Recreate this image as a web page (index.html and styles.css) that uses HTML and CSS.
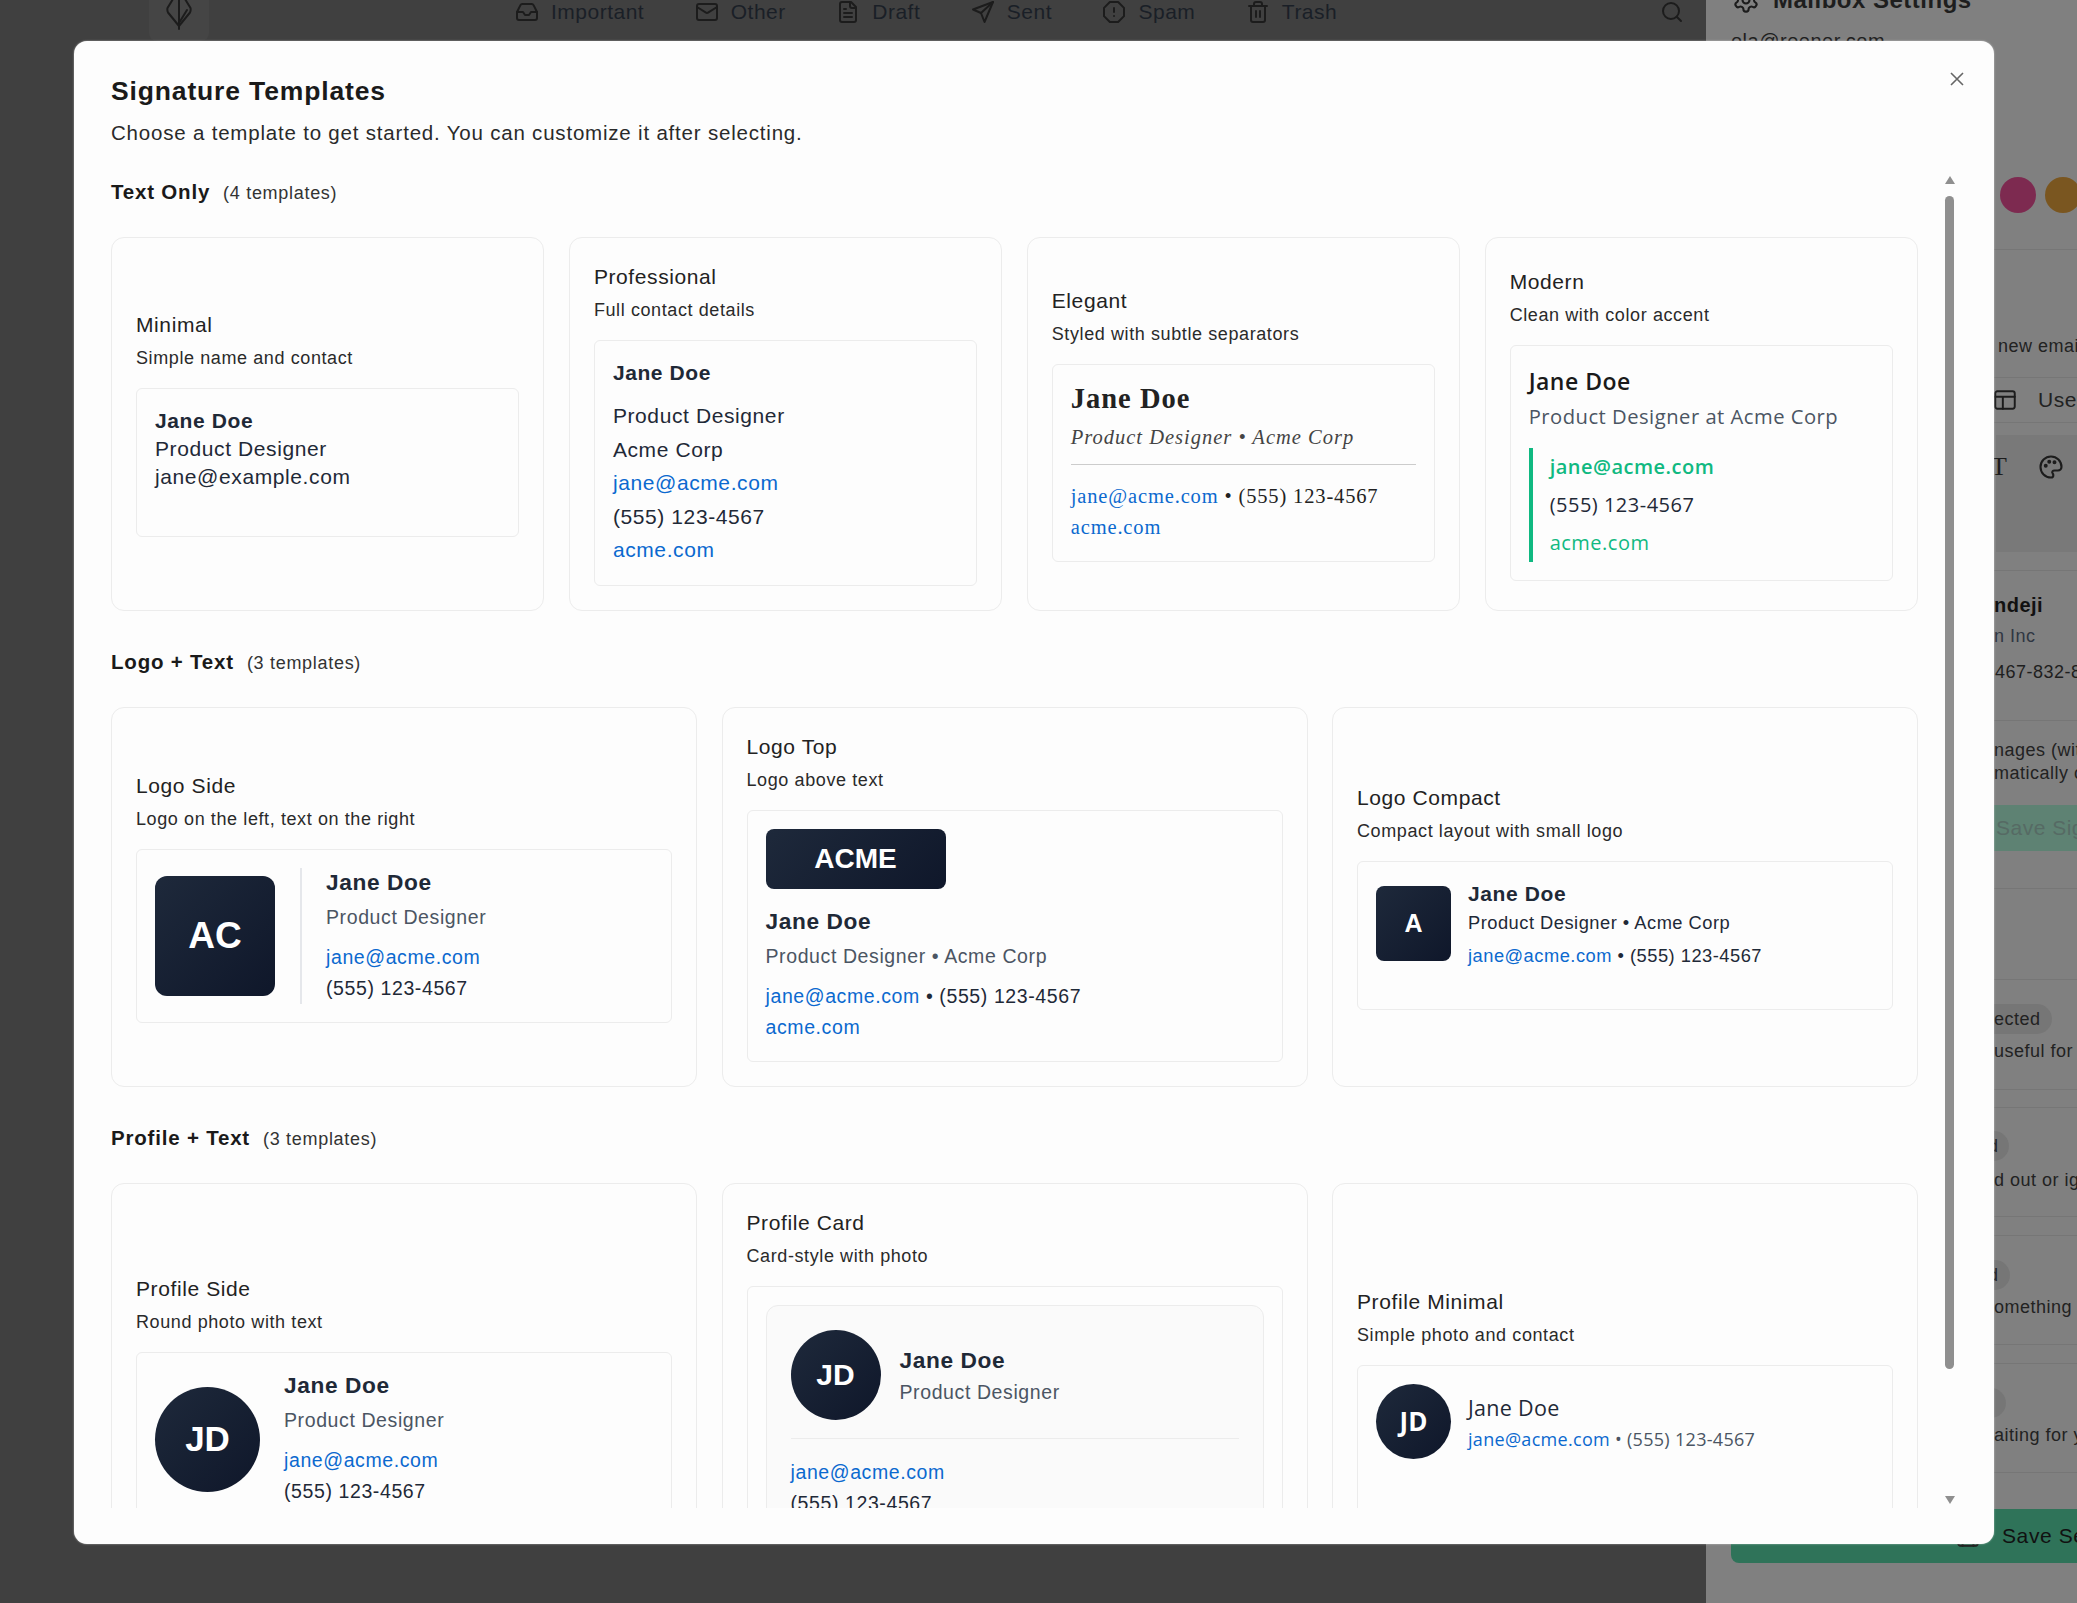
FILE: index.html
```html
<!DOCTYPE html>
<html lang="en">
<head>
    <meta charset="UTF-8">
    <title>Signature Templates</title>
    <link rel="stylesheet" href="styles.css">
</head>
<body>
    <div class="app">
        <div class="app-main">
            <div class="topnav">
                <div class="logo-tile">
                    <svg width="26" height="30" viewBox="0 0 26 30" fill="none" stroke="#1c1c1c" stroke-width="2" stroke-linejoin="round" stroke-linecap="round"><path d="M7 -1L1.500 8Q1 10 2 12.500L13 26L24 12.500Q25 10 24.500 8L19 -1"/><path d="M13 0V29"/><path d="M13 23L21 10"/></svg>
                </div>
                <div class="nav-items">
                    <div class="nav-item">
                        <svg class="nav-icon" viewBox="0 0 24 24"><path d="M22 12h-6l-2 3h-4l-2-3H2"/><path d="M5.450 5.110L2 12v6a2 2 0 0 0 2 2h16a2 2 0 0 0 2-2v-6l-3.450-6.890A2 2 0 0 0 16.760 4H7.240a2 2 0 0 0-1.790 1.110z"/></svg>
                        <span>Important</span>
                    </div>
                    <div class="nav-item">
                        <svg class="nav-icon" viewBox="0 0 24 24"><rect x="2" y="4" width="20" height="16" rx="2"/><path d="M22 7l-8.970 5.700a1.940 1.940 0 0 1-2.060 0L2 7"/></svg>
                        <span>Other</span>
                    </div>
                    <div class="nav-item">
                        <svg class="nav-icon" viewBox="0 0 24 24"><path d="M15 2H6a2 2 0 0 0-2 2v16a2 2 0 0 0 2 2h12a2 2 0 0 0 2-2V7z"/><path d="M14 2v4a2 2 0 0 0 2 2h4M10 9H8M16 13H8M16 17H8"/></svg>
                        <span>Draft</span>
                    </div>
                    <div class="nav-item">
                        <svg class="nav-icon" viewBox="0 0 24 24"><path d="M22 2L2 9.500l8 3.500 3.500 9z"/><path d="M22 2L10 13"/></svg>
                        <span>Sent</span>
                    </div>
                    <div class="nav-item">
                        <svg class="nav-icon" viewBox="0 0 24 24"><path d="M7.860 2h8.280L22 7.860v8.280L16.140 22H7.860L2 16.140V7.860z"/><path d="M12 8v4M12 16h.01"/></svg>
                        <span>Spam</span>
                    </div>
                    <div class="nav-item">
                        <svg class="nav-icon" viewBox="0 0 24 24"><path d="M3 6h18M19 6v14a2 2 0 0 1-2 2H7a2 2 0 0 1-2-2V6M8 6V4a2 2 0 0 1 2-2h4a2 2 0 0 1 2 2v2M10 11v6M14 11v6"/></svg>
                        <span>Trash</span>
                    </div>
                </div>
                <svg class="nav-icon search-icon" viewBox="0 0 24 24"><circle cx="11" cy="11" r="8"/><path d="M21 21l-4.300-4.300"/></svg>
            </div>
        </div>

        <div class="side">
            <div class="side-head">
                <svg class="gear-icon" viewBox="0 0 24 24"><path d="M12.220 2h-.44a2 2 0 0 0-2 2v.18a2 2 0 0 1-1 1.730l-.43.25a2 2 0 0 1-2 0l-.15-.08a2 2 0 0 0-2.730.73l-.22.38a2 2 0 0 0 .73 2.730l.15.1a2 2 0 0 1 1 1.720v.51a2 2 0 0 1-1 1.740l-.15.09a2 2 0 0 0-.73 2.730l.22.38a2 2 0 0 0 2.730.73l.15-.08a2 2 0 0 1 2 0l.43.25a2 2 0 0 1 1 1.730V20a2 2 0 0 0 2 2h.44a2 2 0 0 0 2-2v-.18a2 2 0 0 1 1-1.730l.43-.25a2 2 0 0 1 2 0l.15.08a2 2 0 0 0 2.730-.73l.22-.39a2 2 0 0 0-.73-2.730l-.15-.08a2 2 0 0 1-1-1.740v-.5a2 2 0 0 1 1-1.740l.15-.09a2 2 0 0 0 .73-2.730l-.22-.38a2 2 0 0 0-2.730-.73l-.15.08a2 2 0 0 1-2 0l-.43-.25a2 2 0 0 1-1-1.730V4a2 2 0 0 0-2-2z"/><circle cx="12" cy="12" r="3"/></svg>
                <span class="side-title">Mailbox Settings</span>
            </div>
            <div class="side-mail">ola@reener.com</div>

            <div class="swatches">
                <span class="swatch swatch-pink"></span>
                <span class="swatch swatch-amber"></span>
            </div>

            <div class="side-line line-a"></div>
            <div class="side-text text-new">new email</div>
            <div class="use-row">
                <svg class="side-icon" viewBox="0 0 24 24"><rect x="3" y="4" width="18" height="16" rx="2"/><path d="M3 9h18M10 9v11"/></svg>
                <span>Use</span>
            </div>
            <div class="toolbar">
                <span class="tool-t">T</span>
                <svg class="side-icon palette" viewBox="0 0 24 24"><path d="M12 3a9 9 0 1 0 0 18c1.500 0 2-1 2-2 0-.6-.3-1-.6-1.500-.4-.5-.4-1.500 0-2 .4-.5 1-.5 1.600-.5H18a3 3 0 0 0 3-3c0-5-4-9-9-9z"/><circle cx="7.500" cy="11" r=".8"/><circle cx="10.500" cy="7.500" r=".8"/><circle cx="15" cy="8" r=".8"/></svg>
            </div>
            <div class="side-line line-b"></div>
            <div class="person-name">ndeji</div>
            <div class="person-org">n Inc</div>
            <div class="person-tel">467-832-8</div>
            <div class="side-line line-c"></div>
            <div class="side-text text-images">nages (with</div>
            <div class="side-text text-auto">matically c</div>
            <div class="save-sig">Save Sig</div>
            <div class="side-line line-d"></div>

            <div class="side-line line-e"></div>
            <div class="status-pill pill-a">ected</div>
            <div class="side-text text-useful">useful for</div>
            <div class="side-line line-f"></div>
            <div class="side-line line-g"></div>
            <div class="status-pill pill-b">d</div>
            <div class="side-text text-out">d out or ig</div>
            <div class="side-line line-h"></div>
            <div class="side-line line-i"></div>
            <div class="status-pill pill-c">d</div>
            <div class="side-text text-some">omething</div>
            <div class="side-line line-j"></div>
            <div class="side-line line-k"></div>
            <div class="status-pill pill-d"></div>
            <div class="side-text text-wait">aiting for y</div>
            <div class="side-line line-l"></div>

            <button class="save-settings">
                <svg class="side-icon" viewBox="0 0 24 24"><path d="M5 3h11l5 5v11a2 2 0 0 1-2 2H5a2 2 0 0 1-2-2V5a2 2 0 0 1 2-2z"/><path d="M7 3v5h8M7 21v-7h10v7"/></svg>
                <span>Save Settings</span>
            </button>
        </div>
    </div>

    <div class="modal">
        <div class="modal-head">
            <h2>Signature Templates</h2>
            <p>Choose a template to get started. You can customize it after selecting.</p>
            <svg class="modal-close" viewBox="0 0 14 14"><path d="M1 1l12 12M13 1L1 13"/></svg>
        </div>

        <div class="modal-body">
            <div class="modal-scroll">
                <div class="section-head"><strong>Text Only</strong><span>(4 templates)</span></div>
                <div class="card-grid four">
                    <div class="tpl-card">
                        <div class="tpl-title">Minimal</div>
                        <div class="tpl-sub">Simple name and contact</div>
                        <div class="preview">
                            <div class="sig-name tight">Jane Doe</div>
                            <div class="sig-line tight">Product Designer</div>
                            <div class="sig-line tight">jane@example.com</div>
                        </div>
                    </div>
                    <div class="tpl-card">
                        <div class="tpl-title">Professional</div>
                        <div class="tpl-sub">Full contact details</div>
                        <div class="preview">
                            <div class="sig-name spaced">Jane Doe</div>
                            <div class="sig-line">Product Designer</div>
                            <div class="sig-line">Acme Corp</div>
                            <div class="sig-line"><a>jane@acme.com</a></div>
                            <div class="sig-line">(555) 123-4567</div>
                            <div class="sig-line"><a>acme.com</a></div>
                        </div>
                    </div>
                    <div class="tpl-card">
                        <div class="tpl-title">Elegant</div>
                        <div class="tpl-sub">Styled with subtle separators</div>
                        <div class="preview elegant">
                            <div class="el-name">Jane Doe</div>
                            <div class="el-role">Product Designer • Acme Corp</div>
                            <div class="el-contact">
                                <div><a>jane@acme.com</a> • (555) 123-4567</div>
                                <div><a>acme.com</a></div>
                            </div>
                        </div>
                    </div>
                    <div class="tpl-card">
                        <div class="tpl-title">Modern</div>
                        <div class="tpl-sub">Clean with color accent</div>
                        <div class="preview modern">
                            <div class="mod-name">Jane Doe</div>
                            <div class="mod-role">Product Designer at Acme Corp</div>
                            <div class="mod-contact">
                                <div class="mod-mail">jane@acme.com</div>
                                <div>(555) 123-4567</div>
                                <div class="mod-site">acme.com</div>
                            </div>
                        </div>
                    </div>
                </div>

                <div class="section-head"><strong>Logo + Text</strong><span>(3 templates)</span></div>
                <div class="card-grid three">
                    <div class="tpl-card">
                        <div class="tpl-title">Logo Side</div>
                        <div class="tpl-sub">Logo on the left, text on the right</div>
                        <div class="preview row">
                            <div class="mark mark-big">AC</div>
                            <div class="side-text-col ruled">
                                <div class="sig-name big">Jane Doe</div>
                                <div class="sig-role">Product Designer</div>
                                <div class="sig-small"><a>jane@acme.com</a></div>
                                <div class="sig-small">(555) 123-4567</div>
                            </div>
                        </div>
                    </div>
                    <div class="tpl-card">
                        <div class="tpl-title">Logo Top</div>
                        <div class="tpl-sub">Logo above text</div>
                        <div class="preview">
                            <div class="mark mark-wide">ACME</div>
                            <div class="sig-name big">Jane Doe</div>
                            <div class="sig-role">Product Designer • Acme Corp</div>
                            <div class="sig-small"><a>jane@acme.com</a> • (555) 123-4567</div>
                            <div class="sig-small"><a>acme.com</a></div>
                        </div>
                    </div>
                    <div class="tpl-card">
                        <div class="tpl-title">Logo Compact</div>
                        <div class="tpl-sub">Compact layout with small logo</div>
                        <div class="preview row compact">
                            <div class="mark mark-small">A</div>
                            <div>
                                <div class="sig-name">Jane Doe</div>
                                <div class="compact-line">Product Designer • Acme Corp</div>
                                <div class="compact-line"><a>jane@acme.com</a> • (555) 123-4567</div>
                            </div>
                        </div>
                    </div>
                </div>

                <div class="section-head"><strong>Profile + Text</strong><span>(3 templates)</span></div>
                <div class="card-grid three">
                    <div class="tpl-card">
                        <div class="tpl-title">Profile Side</div>
                        <div class="tpl-sub">Round photo with text</div>
                        <div class="preview row">
                            <div class="mark round round-big">JD</div>
                            <div class="side-text-col">
                                <div class="sig-name big">Jane Doe</div>
                                <div class="sig-role">Product Designer</div>
                                <div class="sig-small"><a>jane@acme.com</a></div>
                                <div class="sig-small">(555) 123-4567</div>
                            </div>
                        </div>
                    </div>
                    <div class="tpl-card">
                        <div class="tpl-title">Profile Card</div>
                        <div class="tpl-sub">Card-style with photo</div>
                        <div class="preview">
                            <div class="profile-box">
                                <div class="profile-top">
                                    <div class="mark round round-mid">JD</div>
                                    <div>
                                        <div class="sig-name big">Jane Doe</div>
                                        <div class="sig-role">Product Designer</div>
                                    </div>
                                </div>
                                <div class="sig-small"><a>jane@acme.com</a></div>
                                <div class="sig-small">(555) 123-4567</div>
                                <div class="sig-small"><a>acme.com</a></div>
                            </div>
                        </div>
                    </div>
                    <div class="tpl-card">
                        <div class="tpl-title">Profile Minimal</div>
                        <div class="tpl-sub">Simple photo and contact</div>
                        <div class="preview row pmin">
                            <div class="mark round round-small">JD</div>
                            <div>
                                <div class="pmin-name">Jane Doe</div>
                                <div class="pmin-line"><a>jane@acme.com</a> • (555) 123-4567</div>
                            </div>
                        </div>
                    </div>
                </div>
            </div>
            <div class="fake-scrollbar">
                <span class="arrow-up"></span>
                <span class="thumb"></span>
                <span class="arrow-down"></span>
            </div>
        </div>
    </div>
</body>
</html>
```

FILE: styles.css
```css
* {
    margin: 0;
    padding: 0;
    box-sizing: border-box;
}

html, body {
    height: 100%;
    overflow: hidden;
}

body {
    position: relative;
    font-family: "Liberation Sans", Arial, sans-serif;
    letter-spacing: 0.6px;
    color: #1f2937;
}

/* page behind the dialog */
.app {
    display: flex;
    height: 100%;
}

.app-main {
    flex: 1;
    background: #404040;
}

.topnav {
    display: flex;
    align-items: flex-start;
    padding: 0 22px 0 149px;
    height: 41px;
    color: #1a1f27;
    font-size: 21px;
    letter-spacing: 0.5px;
}

.logo-tile {
    width: 60px;
    height: 41px;
    background: #454545;
    border-radius: 0 0 8px 8px;
    display: flex;
    justify-content: center;
    align-items: flex-start;
    flex-shrink: 0;
}

.nav-items {
    display: flex;
    gap: 50.500px;
    margin-left: 306px;
}

.nav-item {
    display: flex;
    align-items: center;
    gap: 12px;
    height: 24px;
}

.nav-icon {
    width: 24px;
    height: 24px;
    fill: none;
    stroke: #1c1c1c;
    stroke-width: 2;
    stroke-linecap: round;
    stroke-linejoin: round;
    flex-shrink: 0;
}

.search-icon {
    margin-left: auto;
}

.side {
    width: 371px;
    flex-shrink: 0;
    background: #808080;
    position: relative;
    color: #1e1e1e;
    font-size: 18px;
    letter-spacing: 0.5px;
    overflow: hidden;
}

.side-head {
    display: flex;
    align-items: center;
    gap: 13px;
    position: absolute;
    top: -14px;
    left: 26px;
    white-space: nowrap;
}

.gear-icon {
    width: 28px;
    height: 28px;
    fill: none;
    stroke: #1c1c1c;
    stroke-width: 1.800;
    flex-shrink: 0;
}

.side-title {
    font-weight: 700;
    font-size: 24px;
}

.side-mail {
    position: absolute;
    top: 30px;
    left: 25px;
    font-size: 20px;
}

.swatches {
    display: flex;
    gap: 9px;
    position: absolute;
    top: 177px;
    left: 294px;
}

.swatch {
    width: 36px;
    height: 36px;
    border-radius: 50%;
    flex-shrink: 0;
}

.swatch-pink { background: #7d2a50; }
.swatch-amber { background: #7a5620; }

/* the strip of settings still visible right of the dialog */
.side-line {
    position: absolute;
    left: 0;
    right: 0;
    height: 1px;
    background: #767676;
}

.line-a { top: 249px; }
.line-b { top: 570px; }
.line-c { top: 720px; }
.line-d { top: 888px; }
.line-e { top: 979px; }
.line-f { top: 1089px; }
.line-g { top: 1107px; }
.line-h { top: 1216px; }
.line-i { top: 1235px; }
.line-j { top: 1344px; }
.line-k { top: 1363px; }
.line-l { top: 1472px; }

.side-text {
    position: absolute;
    white-space: nowrap;
    line-height: 24px;
    color: #222;
}

.text-new { top: 334px; left: 292px; }
.text-images { top: 738px; left: 288px; }
.text-auto { top: 761px; left: 288px; }
.text-useful { top: 1039px; left: 288px; }
.text-out { top: 1168px; left: 288px; }
.text-some { top: 1295px; left: 288px; }
.text-wait { top: 1423px; left: 288px; }

.use-row {
    position: absolute;
    top: 377px;
    left: 286px;
    width: 100%;
    height: 46px;
    display: flex;
    align-items: center;
    gap: 20px;
    border-top: 1px solid #767676;
    border-bottom: 1px solid #767676;
    font-size: 21px;
    color: #222;
}

.side-icon {
    width: 26px;
    height: 26px;
    fill: none;
    stroke: #1c1c1c;
    stroke-width: 1.800;
    stroke-linecap: round;
    stroke-linejoin: round;
    flex-shrink: 0;
}

.palette {
    width: 28px;
    height: 28px;
}

.toolbar {
    position: absolute;
    top: 435px;
    left: 290px;
    width: 100%;
    height: 117px;
    background: #797979;
    display: flex;
    gap: 30px;
    padding-top: 18px;
}

.tool-t {
    font-family: "Liberation Serif", serif;
    font-size: 26px;
    line-height: 28px;
    width: 16px;
    margin-left: -5px;
    color: #1c1c1c;
}

.person-name {
    position: absolute;
    top: 594px;
    left: 288px;
    font-weight: 700;
    font-size: 20px;
    color: #111;
}

.person-org {
    position: absolute;
    top: 626px;
    left: 288px;
    color: #2f3642;
}

.person-tel {
    position: absolute;
    top: 662px;
    left: 289px;
    white-space: nowrap;
}

.save-sig {
    position: absolute;
    top: 805px;
    left: 288px;
    width: 100%;
    height: 46px;
    background: #5e8273;
    color: #566a64;
    font-size: 21px;
    line-height: 46px;
    padding-left: 2px;
    white-space: nowrap;
}

.status-pill {
    position: absolute;
    height: 30px;
    left: 270px;
    border-radius: 15px;
    background: #767676;
    line-height: 30px;
    font-size: 18px;
    color: #222;
}

.pill-a { top: 1004px; width: 76px; padding-left: 18px; }
.pill-b { top: 1131px; width: 33px; padding-left: 12px; }
.pill-c { top: 1260px; width: 34px; padding-left: 12px; }
.pill-d { top: 1388px; width: 30px; }

.save-settings {
    position: absolute;
    top: 1509px;
    left: 25px;
    width: 500px;
    height: 54px;
    border: none;
    border-radius: 8px;
    background: #2f7359;
    color: #111;
    font: inherit;
    font-size: 21px;
    letter-spacing: 0.6px;
    white-space: nowrap;
    display: flex;
    align-items: center;
    gap: 21px;
    padding-left: 224px;
}

/* dialog */
.modal {
    position: absolute;
    top: 41px;
    left: 74px;
    width: 1920px;
    height: 1503px;
    background: #fdfdfd;
    border-radius: 13px;
    display: flex;
    flex-direction: column;
    box-shadow: 0 0 2px rgba(255, 255, 255, 0.6);
}

.modal-head {
    position: relative;
    padding: 32px 37px 0;
    height: 128px;
    flex-shrink: 0;
}

.modal-head h2 {
    font-size: 26.500px;
    letter-spacing: 0.850px;
    line-height: 36px;
    color: #1a1a1a;
}

.modal-head p {
    margin-top: 11px;
    font-size: 20.500px;
    letter-spacing: 0.800px;
    line-height: 26px;
    color: #2a2a2a;
}

.modal-close {
    position: absolute;
    top: 31px;
    right: 30px;
    width: 14px;
    height: 14px;
    fill: none;
    stroke: #666;
    stroke-width: 1.600;
}

.modal-body {
    position: relative;
    flex: 1;
    min-height: 0;
    margin-bottom: 36px;
    overflow: hidden;
}

.modal-scroll {
    padding: 10px 76px 0 37px;
}

.fake-scrollbar {
    position: absolute;
    top: 0;
    right: 40px;
    bottom: 0;
    width: 9px;
}

.thumb {
    position: absolute;
    top: 27px;
    left: 0;
    width: 9px;
    height: 1173px;
    background: #8f8f8f;
    border-radius: 5px;
}

.arrow-up, .arrow-down {
    position: absolute;
    left: -0.500px;
    width: 0;
    height: 0;
    border-left: 5px solid transparent;
    border-right: 5px solid transparent;
}

.arrow-up {
    top: 7px;
    border-bottom: 8px solid #8f8f8f;
}

.arrow-down {
    top: 1327px;
    border-top: 8px solid #8f8f8f;
}

.section-head {
    display: flex;
    align-items: baseline;
    gap: 13px;
    height: 26px;
    line-height: 26px;
    margin-bottom: 32px;
    letter-spacing: 0.800px;
}

.section-head strong {
    font-size: 20.500px;
    color: #1a1a1a;
}

.section-head span {
    font-size: 18px;
    letter-spacing: 0.700px;
    color: #333;
}

.card-grid {
    display: grid;
    gap: 24.500px;
    margin-bottom: 38px;
}

.four { grid-template-columns: repeat(4, 1fr); }
.three { grid-template-columns: repeat(3, 1fr); }

.tpl-card {
    display: flex;
    flex-direction: column;
    justify-content: center;
    padding: 24px;
    border: 1px solid #ececec;
    border-radius: 13px;
    background: #fdfdfd;
}

.tpl-title {
    font-size: 21px;
    line-height: 30px;
    margin-bottom: 5px;
    color: #222;
}

.tpl-sub {
    font-size: 18px;
    line-height: 26px;
    margin-bottom: 17px;
    color: #2a2a2a;
}

.preview {
    min-height: 149px;
    padding: 18px;
    border: 1px solid #ececec;
    border-radius: 6px;
    background: #fdfdfd;
    font-size: 21px;
    color: #1f2937;
}

.preview a {
    color: #0b69cf;
}

.row {
    display: flex;
    align-items: center;
}

.sig-name {
    font-weight: 700;
    font-size: 21px;
    line-height: 28px;
    color: #1f2937;
}

.sig-name.spaced {
    margin-bottom: 12px;
}

.sig-line {
    line-height: 33.600px;
}

.sig-line.tight {
    line-height: 28px;
}

.sig-name.big {
    font-size: 22.700px;
    line-height: 28px;
}

.sig-role {
    font-size: 19.500px;
    line-height: 30px;
    margin: 6px 0 10px;
    color: #4b5563;
}

.sig-small {
    font-size: 19.500px;
    line-height: 31px;
    color: #1f2937;
}

/* elegant */
.elegant {
    font-family: "Liberation Serif", serif;
}

.el-name {
    font-weight: 700;
    font-size: 28.500px;
    letter-spacing: 1px;
    line-height: 32px;
    margin-bottom: 7px;
    color: #222;
}

.el-role {
    font-style: italic;
    font-size: 20.500px;
    letter-spacing: 1px;
    line-height: 30px;
    padding-bottom: 12px;
    border-bottom: 1px solid #ccc;
    color: #444;
    margin-bottom: 16px;
}

.el-contact {
    font-size: 20.500px;
    line-height: 31px;
    letter-spacing: 0.850px;
    color: #222;
}

/* modern */
.modern {
    font-family: "Open Sans", sans-serif;
    letter-spacing: 0.500px;
}

.mod-name {
    font-weight: 600;
    font-size: 23px;
    line-height: 35px;
    color: #1a1a1a;
}

.mod-role {
    font-size: 20.200px;
    line-height: 34px;
    margin-bottom: 15px;
    color: #4b5563;
}

.mod-contact {
    border-left: 4px solid #10b981;
    padding-left: 17px;
    font-size: 20px;
    line-height: 38px;
}

.mod-mail {
    color: #10b981;
    font-weight: 600;
}

.mod-site {
    color: #10b981;
}

/* logo + profile marks */
.mark {
    display: flex;
    align-items: center;
    justify-content: center;
    flex-shrink: 0;
    background: linear-gradient(135deg, #1e293b, #0f172a);
    color: #fff;
    font-weight: 700;
    letter-spacing: 0;
}

.mark-big {
    width: 120px;
    height: 120px;
    border-radius: 12px;
    font-size: 37px;
}

.mark-wide {
    width: 180px;
    height: 60px;
    border-radius: 8px;
    font-size: 28px;
    margin-bottom: 18px;
}

.mark-small {
    width: 75px;
    height: 75px;
    border-radius: 8px;
    font-size: 25px;
    margin-top: 6px;
}

.round { border-radius: 50%; }
.round-big { width: 105px; height: 105px; font-size: 35px; }
.round-mid { width: 90px; height: 90px; font-size: 30px; }
.round-small { width: 75px; height: 75px; font-size: 26px; }

.side-text-col {
    margin-left: 24px;
}

.side-text-col.ruled {
    margin-left: 25px;
    padding-left: 24px;
    border-left: 2px solid #e5e7eb;
}

.compact {
    align-items: flex-start;
}

.compact > div:last-child {
    margin-left: 17px;
}

.compact .sig-name {
    line-height: 27px;
}

.compact-line {
    font-size: 18.300px;
    letter-spacing: 0.500px;
    line-height: 32px;
}

.compact-line + .compact-line {
    margin-top: 1px;
}

.profile-box {
    padding: 24px 24px 23px;
    border: 1px solid #ececec;
    border-radius: 12px;
    background: #fafafa;
}

.profile-top {
    display: flex;
    align-items: center;
    gap: 19px;
    padding-bottom: 18px;
    margin-bottom: 18px;
    border-bottom: 1px solid #ececec;
}

.profile-top .sig-name {
    margin-top: 3px;
}

.profile-top .sig-role {
    margin: 3px 0 0;
}

.pmin {
    align-items: flex-start;
    font-family: "Open Sans", sans-serif;
    letter-spacing: 0.300px;
}

.pmin > div:last-child {
    margin-left: 17px;
}

.pmin-name {
    font-weight: 500;
    font-size: 21.500px;
    line-height: 32px;
    margin-top: 8px;
}

.pmin-line {
    font-size: 18px;
    line-height: 30px;
    color: #4b5563;
}
```
